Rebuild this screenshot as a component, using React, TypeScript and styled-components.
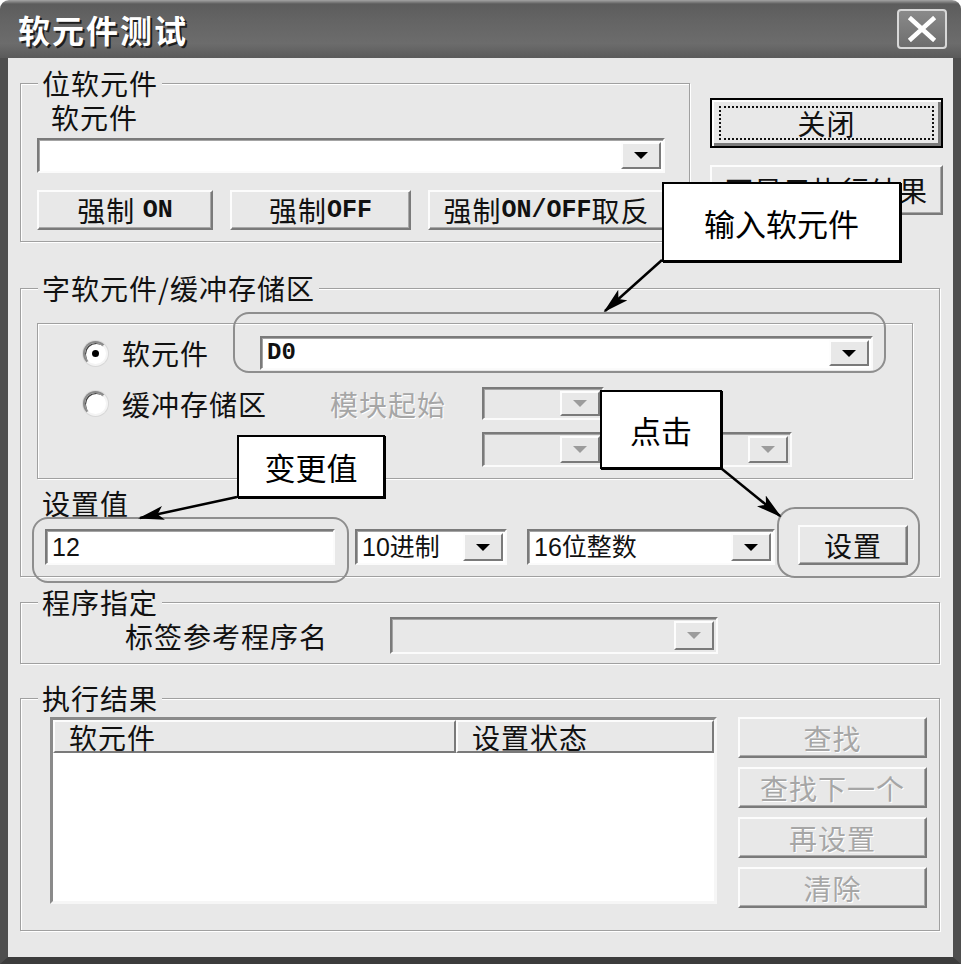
import React from 'react';
import styled, { createGlobalStyle } from 'styled-components';

const UI_FONT = `"Noto Sans CJK SC", "Noto Sans", sans-serif`;
const LATIN_FONT = `"Liberation Sans", "Noto Sans CJK SC", sans-serif`;
const MONO_FONT = `"Liberation Mono", "DejaVu Sans Mono", monospace`;

const FACE = '#e8e8e8';
const SHADOW = '#7a7a7a';

const GlobalStyle = createGlobalStyle`
  html, body {
    margin: 0;
    padding: 0;
    background: #fff;
  }
  body {
    font-family: ${UI_FONT};
    color: #111;
  }
  * {
    box-sizing: border-box;
  }
`;

const Window = styled.div`
  position: relative;
  width: 961px;
  height: 964px;
  display: flex;
  flex-direction: column;
  border-radius: 9px 9px 0 0;
  overflow: hidden;
`;

const TitleBar = styled.div`
  height: 58px;
  flex-shrink: 0;
  display: flex;
  align-items: center;
  justify-content: space-between;
  padding: 0 14px 0 18px;
  background: linear-gradient(180deg, #a4a4a4 0, #5c5c5c 4px, #646464 35%, #6c6c6c 75%, #5a5a5a 100%);
`;

const TitleText = styled.span`
  font-size: 32px;
  font-weight: 700;
  letter-spacing: 2px;
  line-height: 36px;
  color: #fff;
  text-shadow: 2px 2px 0 #1e1e1e;
`;

const CloseBox = styled.div`
  width: 50px;
  height: 40px;
  border: 2px solid #d8d8d8;
  border-radius: 4px;
  background: linear-gradient(180deg, #8a8a8a, #6e6e6e);
  display: flex;
  align-items: center;
  justify-content: center;
`;

const Body = styled.div`
  flex: 1;
  display: flex;
  flex-direction: column;
  background: ${FACE};
  border-left: 8px solid #4e4e4e;
  border-right: 8px solid #4e4e4e;
  border-bottom: 7px solid #3c3c3c;
  padding: 25px 13px 0 12px;
`;

const TopSection = styled.div`
  display: flex;
  align-items: flex-start;
`;

const Group = styled.div<{ $top?: number; $width?: number; $pad: string }>`
  position: relative;
  flex-shrink: 0;
  margin-top: ${p => p.$top ?? 0}px;
  width: ${p => (p.$width ? `${p.$width}px` : 'auto')};
  padding: ${p => p.$pad};
  border: 1px solid #a0a0a0;
  box-shadow: inset 1px 1px 0 #fff, 1px 1px 0 #fff;
`;

const GroupTitle = styled.span`
  position: absolute;
  top: -13px;
  left: 17px;
  padding: 0 4px;
  background: ${FACE};
  font-size: 28px;
  line-height: 24px;
  letter-spacing: 1px;
  white-space: nowrap;
`;

const Label = styled.span<{ $disabled?: boolean; $width?: number; $indent?: number }>`
  display: inline-block;
  flex-shrink: 0;
  width: ${p => (p.$width ? `${p.$width}px` : 'auto')};
  margin-left: ${p => p.$indent ?? 0}px;
  font-size: 28px;
  line-height: 30px;
  letter-spacing: 1px;
  white-space: nowrap;
  color: ${p => (p.$disabled ? '#a6a6a6' : '#111')};
  text-shadow: ${p => (p.$disabled ? '1px 1px 0 #fff' : 'none')};
`;

const Mono = styled.span`
  font-family: ${MONO_FONT};
  font-weight: 700;
  font-size: 25px;
  letter-spacing: 0;
`;

const Row = styled.div<{ $top?: number; $indent?: number; $gap?: number; $align?: string }>`
  display: flex;
  align-items: ${p => p.$align ?? 'center'};
  margin-top: ${p => p.$top ?? 0}px;
  padding-left: ${p => p.$indent ?? 0}px;
  gap: ${p => p.$gap ?? 0}px;
`;

const Sunken = styled.div<{ $width: number; $height: number; $disabled?: boolean; $left?: number }>`
  display: flex;
  align-items: center;
  flex-shrink: 0;
  width: ${p => p.$width}px;
  height: ${p => p.$height}px;
  margin-left: ${p => p.$left ?? 0}px;
  padding: 0 2px 0 5px;
  background: ${p => (p.$disabled ? FACE : '#fff')};
  border: 2px solid;
  border-color: ${SHADOW} #fbfbfb #fbfbfb ${SHADOW};
  box-shadow: inset 1px 1px 0 #a4a4a4;
`;

const FieldValue = styled.span<{ $mono?: boolean }>`
  flex: 1;
  font-family: ${p => (p.$mono ? MONO_FONT : LATIN_FONT)};
  font-weight: ${p => (p.$mono ? 700 : 400)};
  font-size: ${p => (p.$mono ? 24 : 25)}px;
  line-height: 30px;
  white-space: nowrap;
  overflow: hidden;
`;

const DropButton = styled.span`
  display: flex;
  align-items: center;
  justify-content: center;
  width: 40px;
  height: calc(100% - 4px);
  background: ${FACE};
  border: 2px solid;
  border-color: #fdfdfd ${SHADOW} ${SHADOW} #fdfdfd;
`;

const Triangle = styled.span<{ $disabled?: boolean }>`
  width: 0;
  height: 0;
  border-left: 7px solid transparent;
  border-right: 7px solid transparent;
  border-top: 7px solid ${p => (p.$disabled ? '#9c9c9c' : '#000')};
`;

const Button = styled.div<{ $width: number; $height: number; $disabled?: boolean; $left?: number }>`
  display: flex;
  align-items: center;
  justify-content: center;
  flex-shrink: 0;
  width: ${p => p.$width}px;
  height: ${p => p.$height}px;
  margin-left: ${p => p.$left ?? 0}px;
  background: ${FACE};
  border: 2px solid;
  border-color: #fcfcfc ${SHADOW} ${SHADOW} #fcfcfc;
  box-shadow: inset -1px -1px 0 #a8a8a8;
  font-size: 28px;
  letter-spacing: 1px;
  white-space: nowrap;
  overflow: hidden;
  color: ${p => (p.$disabled ? '#a6a6a6' : '#111')};
  text-shadow: ${p => (p.$disabled ? '1px 1px 0 #fff' : 'none')};
`;

const DefaultButton = styled.div`
  display: flex;
  width: 233px;
  height: 50px;
  padding: 6px 7px;
  background: ${FACE};
  border: 2px solid #000;
  box-shadow: inset 2px 2px 0 #fff, inset -3px -3px 0 ${SHADOW};
`;

const FocusRect = styled.span`
  flex: 1;
  display: flex;
  align-items: center;
  justify-content: center;
  border: 2px dotted #111;
  font-size: 28px;
  letter-spacing: 1px;
`;

const RightColumn = styled.div`
  display: flex;
  flex-direction: column;
  gap: 17px;
  margin-left: 20px;
  padding-top: 15px;
  flex-shrink: 0;
`;

const InnerFrame = styled.div`
  width: 876px;
  height: 156px;
  padding-top: 12px;
  border: 1px solid #a0a0a0;
  box-shadow: inset 1px 1px 0 #fff, 1px 1px 0 #fff;
`;

const RadioCell = styled.div<{ $width: number }>`
  display: flex;
  align-items: center;
  gap: 14px;
  width: ${p => p.$width}px;
  flex-shrink: 0;
`;

const Radio = styled.span<{ $checked?: boolean }>`
  display: flex;
  align-items: center;
  justify-content: center;
  width: 25px;
  height: 25px;
  flex-shrink: 0;
  border-radius: 50%;
  background: #fff;
  border: 2px solid;
  border-color: #8a8a8a #f4f4f4 #f4f4f4 #8a8a8a;
  box-shadow: inset 1px 1px 0 #404040, 0 0 0 1px #d8d8d8;

  &::after {
    content: '';
    width: 7px;
    height: 7px;
    border-radius: 50%;
    background: ${p => (p.$checked ? '#000' : 'transparent')};
  }
`;

const ResultArea = styled.div`
  display: flex;
  align-items: flex-start;
`;

const ListView = styled.div`
  display: flex;
  flex-direction: column;
  width: 668px;
  height: 187px;
  background: #fff;
  border: 3px solid;
  border-color: #8a8a8a #f6f6f6 #f6f6f6 #8a8a8a;
`;

const ListHeader = styled.div`
  display: flex;
  height: 33px;
  flex-shrink: 0;
`;

const HeaderCell = styled.div<{ $width?: number }>`
  display: flex;
  align-items: center;
  flex: ${p => (p.$width ? `0 0 ${p.$width}px` : '1')};
  padding-left: 14px;
  background: ${FACE};
  border: 2px solid;
  border-color: #fcfcfc ${SHADOW} ${SHADOW} #fcfcfc;
  font-size: 28px;
  letter-spacing: 1px;
  white-space: nowrap;
`;

const ButtonStack = styled.div`
  display: flex;
  flex-direction: column;
  gap: 9px;
  margin-left: 21px;
`;

const Outline = styled.div<{ $x: number; $y: number; $w: number; $h: number; $r: number }>`
  position: absolute;
  left: ${p => p.$x}px;
  top: ${p => p.$y}px;
  width: ${p => p.$w}px;
  height: ${p => p.$h}px;
  border: 2px solid #8e8e8e;
  border-radius: ${p => p.$r}px;
  pointer-events: none;
`;

const Callout = styled.div<{ $x: number; $y: number; $w: number; $h: number }>`
  position: absolute;
  left: ${p => p.$x}px;
  top: ${p => p.$y}px;
  width: ${p => p.$w}px;
  height: ${p => p.$h}px;
  display: flex;
  align-items: center;
  justify-content: center;
  background: #fff;
  border: 2px solid #000;
  box-shadow: 1px 1px 0 #000;
  font-size: 31px;
  color: #000;
  white-space: nowrap;
`;

const Arrows = styled.svg`
  position: absolute;
  left: 0;
  top: 0;
  width: 961px;
  height: 964px;
  pointer-events: none;
`;

interface ComboProps {
  width: number;
  height?: number;
  value?: string;
  mono?: boolean;
  disabled?: boolean;
  left?: number;
}

const Combo: React.FC<ComboProps> = ({ width, height = 35, value = '', mono, disabled, left }) => (
  <Sunken $width={width} $height={height} $disabled={disabled} $left={left}>
    <FieldValue $mono={mono}>{value}</FieldValue>
    <DropButton>
      <Triangle $disabled={disabled} />
    </DropButton>
  </Sunken>
);

const arrowLines = [
  { x1: 662, y1: 260, x2: 605, y2: 311 },
  { x1: 237, y1: 497, x2: 140, y2: 518 },
  { x1: 722, y1: 469, x2: 780, y2: 516 },
];

const App: React.FC = () => (
  <>
    <GlobalStyle />
    <Window>
      <TitleBar>
        <TitleText>软元件测试</TitleText>
        <CloseBox>
          <svg width="30" height="26" viewBox="0 0 30 26">
            <path d="M4 3 L26 23 M26 3 L4 23" stroke="#fff" strokeWidth="4.5" strokeLinecap="square" />
          </svg>
        </CloseBox>
      </TitleBar>

      <Body>
        <TopSection>
          <Group $width={670} $pad="18px 24px 11px 16px">
            <GroupTitle>位软元件</GroupTitle>
            <Label $indent={14}>软元件</Label>
            <Row $top={4}>
              <Combo width={628} />
            </Row>
            <Row $top={17} $gap={17}>
              <Button $width={176} $height={40}>
                强制&nbsp;<Mono>ON</Mono>
              </Button>
              <Button $width={181} $height={40}>
                强制<Mono>OFF</Mono>
              </Button>
              <Button $width={237} $height={40}>
                强制<Mono>ON/OFF</Mono>取反
              </Button>
            </Row>
          </Group>

          <RightColumn>
            <DefaultButton>
              <FocusRect>关闭</FocusRect>
            </DefaultButton>
            <Button $width={233} $height={50}>
              不显示执行结果
            </Button>
          </RightColumn>
        </TopSection>

        <Group $top={46} $pad="34px 12px 11px 16px">
          <GroupTitle>字软元件/缓冲存储区</GroupTitle>
          <InnerFrame>
            <Row $indent={45}>
              <RadioCell $width={177}>
                <Radio $checked />
                <Label>软元件</Label>
              </RadioCell>
              <Combo width={613} height={34} value="D0" mono />
            </Row>
            <Row $top={17} $indent={45}>
              <RadioCell $width={247}>
                <Radio />
                <Label>缓冲存储区</Label>
              </RadioCell>
              <Label $disabled $width={117}>
                模块起始
              </Label>
              <Combo width={122} height={33} disabled left={35} />
            </Row>
            <Row $top={12} $indent={444}>
              <Combo width={122} disabled />
              <Combo width={177} disabled left={11} />
            </Row>
          </InnerFrame>

          <Row $top={9} $indent={5}>
            <Label>设置值</Label>
          </Row>
          <Row $top={7} $indent={8} $align="flex-end">
            <Sunken $width={290} $height={36}>
              <FieldValue>12</FieldValue>
            </Sunken>
            <Combo width={152} height={36} value="10进制" left={20} />
            <Combo width={248} height={36} value="16位整数" left={20} />
            <Button $width={110} $height={40} $left={23}>
              设置
            </Button>
          </Row>
        </Group>

        <Group $top={25} $pad="14px 12px 9px 16px">
          <GroupTitle>程序指定</GroupTitle>
          <Row $indent={88}>
            <Label $width={265}>标签参考程序名</Label>
            <Combo width={328} height={37} disabled />
          </Row>
        </Group>

        <Group $top={34} $pad="18px 12px 22px 29px">
          <GroupTitle>执行结果</GroupTitle>
          <ResultArea>
            <ListView>
              <ListHeader>
                <HeaderCell $width={403}>软元件</HeaderCell>
                <HeaderCell>设置状态</HeaderCell>
              </ListHeader>
            </ListView>
            <ButtonStack>
              <Button $width={189} $height={41} $disabled>
                查找
              </Button>
              <Button $width={189} $height={41} $disabled>
                查找下一个
              </Button>
              <Button $width={189} $height={41} $disabled>
                再设置
              </Button>
              <Button $width={189} $height={41} $disabled>
                清除
              </Button>
            </ButtonStack>
          </ResultArea>
        </Group>
      </Body>

      <Outline $x={233} $y={312} $w={653} $h={61} $r={16} />
      <Outline $x={32} $y={517} $w={317} $h={66} $r={16} />
      <Outline $x={777} $y={507} $w={143} $h={71} $r={18} />

      <Callout $x={662} $y={182} $w={239} $h={80}>
        输入软元件
      </Callout>
      <Callout $x={237} $y={435} $w={148} $h={63}>
        变更值
      </Callout>
      <Callout $x={600} $y={390} $w={122} $h={79}>
        点击
      </Callout>

      <Arrows viewBox="0 0 961 964">
        <defs>
          <marker
            id="head"
            markerUnits="userSpaceOnUse"
            markerWidth="26"
            markerHeight="14"
            refX="24"
            refY="7"
            orient="auto"
          >
            <path d="M0 0 L26 7 L0 14 L6 7 Z" fill="#000" />
          </marker>
        </defs>
        {arrowLines.map((l, i) => (
          <line key={i} {...l} stroke="#000" strokeWidth="2.5" markerEnd="url(#head)" />
        ))}
      </Arrows>
    </Window>
  </>
);

export default App;
